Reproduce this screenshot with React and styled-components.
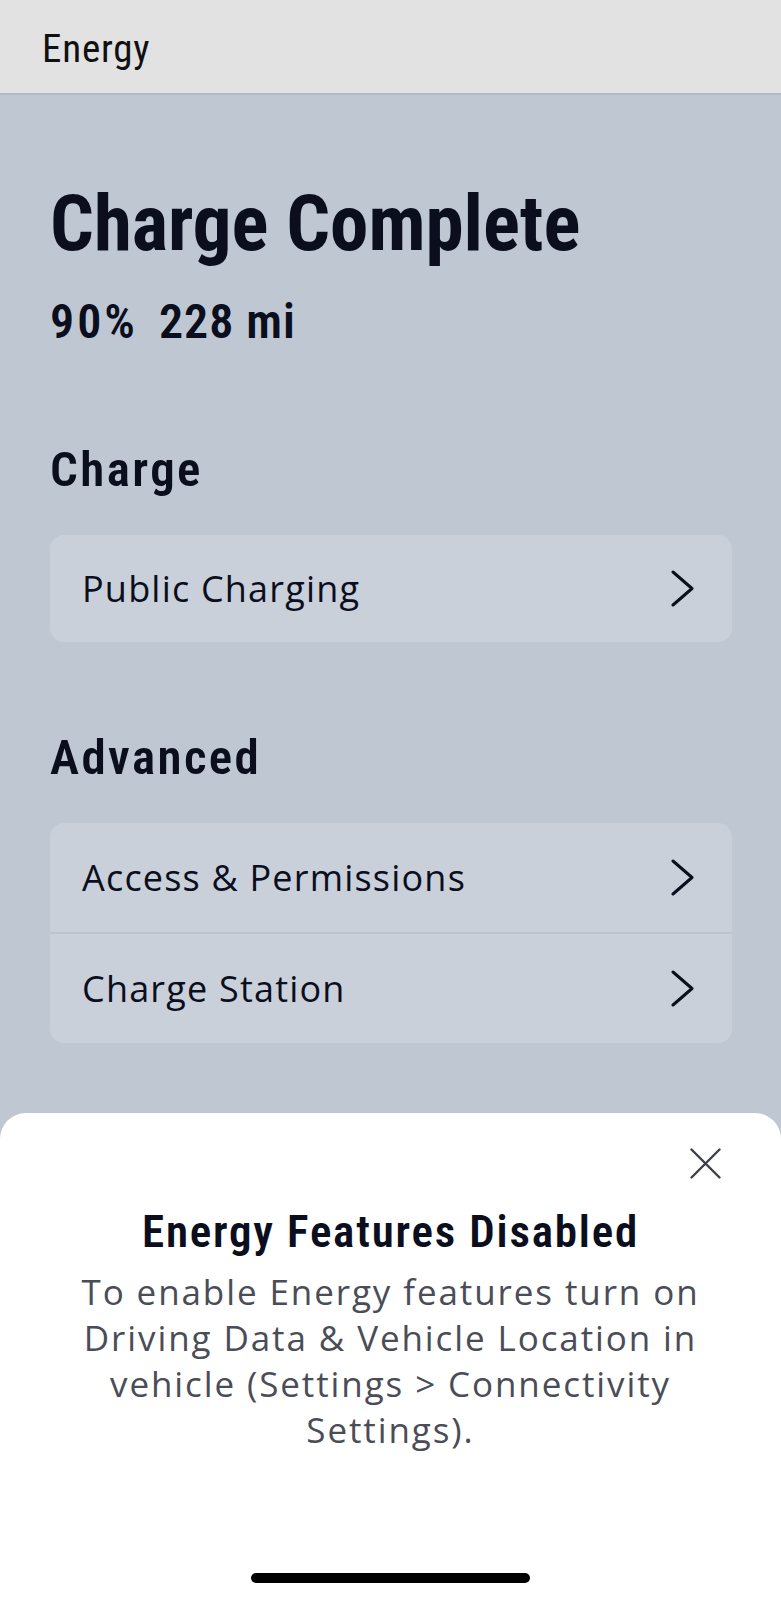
import React from 'react';
import styled, { createGlobalStyle } from 'styled-components';

const GlobalStyle = createGlobalStyle`
    body {
        margin: 0;
        background: #bfc8d2;
        -webkit-font-smoothing: antialiased;
    }
`

const condensed = `"Roboto Condensed", "DejaVu Sans Condensed", "Liberation Sans Narrow", Roboto, sans-serif`
const regular = `"Open Sans", "Noto Sans", sans-serif`

const Page = styled.div`
    position: relative;
    min-height: 1600px;
    background: #bfc8d2;
    color: #0b0e1d;
    overflow: hidden;
`

const TopBar = styled.header`
    height: 95px;
    display: flex;
    align-items: center;
    padding: 4px 0 0 42px;
    box-sizing: border-box;
    background: #e2e2e2;
    border-bottom: 2px solid #b4b9bf;
`

const TopTitle = styled.div`
    font-family: ${condensed};
    font-stretch: condensed;
    font-size: 39px;
    font-weight: 400;
    letter-spacing: 0.8px;
    color: #111;
`

const Content = styled.main`
    padding: 0 49px 0 50px;
    display: flex;
    flex-direction: column;
`

const Status = styled.h1`
    margin: 91px 0 0;
    font-family: ${condensed};
    font-stretch: condensed;
    font-size: 77px;
    line-height: 77px;
    font-weight: 700;
`

const Stats = styled.div`
    margin-top: 35px;
    display: flex;
    gap: 21px;
    font-family: ${condensed};
    font-stretch: condensed;
    font-size: 48px;
    line-height: 48px;
    font-weight: 600;
`

const Stat = styled.span`
    letter-spacing: ${p => p.$spacing || 0}px;
`

const SectionTitle = styled.h2`
    margin: ${p => p.$top}px 0 41px;
    font-family: ${condensed};
    font-stretch: condensed;
    font-size: 49px;
    line-height: 49px;
    font-weight: 600;
    letter-spacing: 2.4px;
`

const Card = styled.div`
    background: #c9d0da;
    border-radius: 14px;
    overflow: hidden;
    display: flex;
    flex-direction: column;
    gap: 2px;
`

const Divided = styled(Card)`
    background: #bcc4ce;
`

const Row = styled.div`
    height: ${p => p.$h}px;
    display: flex;
    align-items: center;
    justify-content: space-between;
    padding: 0 37px 0 32px;
    background: #c9d0da;
    font-family: ${regular};
    font-size: 36px;
    letter-spacing: 1.2px;
    color: #0b0e1d;
`

const Chevron = () => (
    <svg width="24" height="37" viewBox="0 0 24 37" fill="none">
        <polyline points="2,2 21,18.5 2,35" stroke="#0b0e1d" strokeWidth="3" strokeLinecap="round" strokeLinejoin="round" />
    </svg>
)

const Sheet = styled.section`
    position: absolute;
    left: 0;
    right: 0;
    top: 1113px;
    bottom: 0;
    background: #fff;
    border-radius: 26px 26px 0 0;
    display: flex;
    flex-direction: column;
    align-items: center;
`

const CloseRow = styled.div`
    align-self: stretch;
    display: flex;
    justify-content: flex-end;
    padding: 35px 60px 0 0;
`

const SheetTitle = styled.h3`
    margin: 30px 0 0;
    font-family: ${condensed};
    font-stretch: condensed;
    font-size: 45px;
    line-height: 45px;
    font-weight: 600;
    letter-spacing: 1.8px;
    color: #0b0e1d;
`

const SheetText = styled.p`
    margin: 15px 0 0;
    padding: 0 55px;
    text-align: center;
    font-family: ${regular};
    font-size: 35px;
    line-height: 46px;
    letter-spacing: 1.9px;
    color: #4a4d57;
`

const HomeBar = styled.div`
    margin-top: auto;
    margin-bottom: 17px;
    width: 279px;
    height: 10px;
    border-radius: 5px;
    background: #000;
`

const CloseIcon = () => (
    <svg width="31" height="31" viewBox="0 0 31 31">
        <path d="M1.5 1.5 L29.5 29.5 M29.5 1.5 L1.5 29.5" stroke="#3d4048" strokeWidth="2.4" strokeLinecap="round" />
    </svg>
)

const App = () => {
    return (
        <Page>
            <GlobalStyle />
            <TopBar>
                <TopTitle>Energy</TopTitle>
            </TopBar>
            <Content>
                <Status>Charge Complete</Status>
                <Stats>
                    <Stat $spacing={3}>90%</Stat>
                    <Stat $spacing={1}>228 mi</Stat>
                </Stats>
                <SectionTitle $top={99}>Charge</SectionTitle>
                <Card>
                    <Row $h={107}>Public Charging<Chevron /></Row>
                </Card>
                <SectionTitle $top={91}>Advanced</SectionTitle>
                <Divided>
                    <Row $h={109}>Access &amp; Permissions<Chevron /></Row>
                    <Row $h={109}>Charge Station<Chevron /></Row>
                </Divided>
            </Content>
            <Sheet>
                <CloseRow><CloseIcon /></CloseRow>
                <SheetTitle>Energy Features Disabled</SheetTitle>
                <SheetText>
                    To enable Energy features turn on Driving Data &amp; Vehicle Location in vehicle (Settings &gt; Connectivity Settings).
                </SheetText>
                <HomeBar />
            </Sheet>
        </Page>
    )
}

export default App
